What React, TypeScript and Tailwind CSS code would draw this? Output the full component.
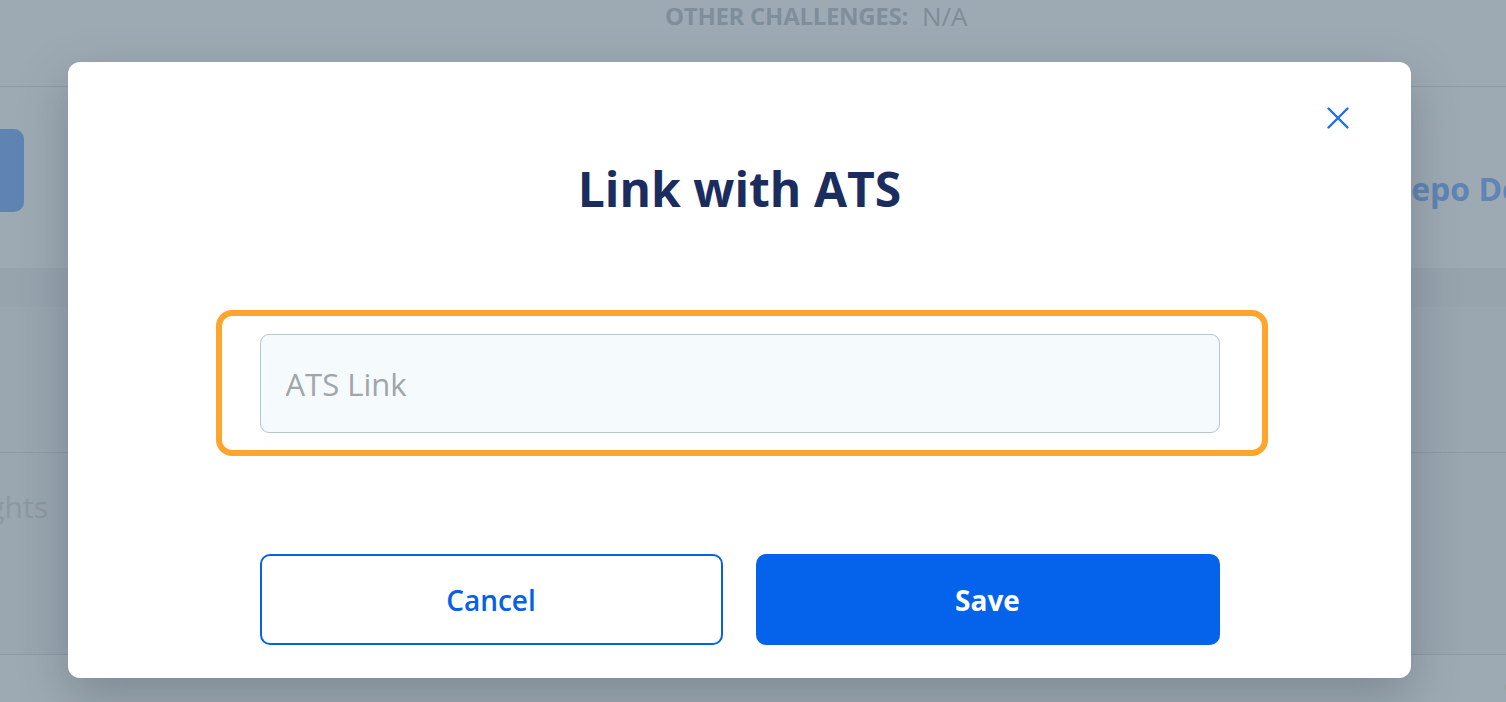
export default function App() {
  return (
    <div className="relative w-[1506px] h-[702px] overflow-hidden bg-[#9eaab3] font-['Open_Sans',sans-serif]">
      {/* dimmed page behind the dialog */}
      <div className="flex flex-col">
        <div className="h-[87px] flex items-start pt-[0px] pl-[665px] gap-[14px] border-b border-[#8e9ba6]">
          <span className="text-[24px] font-bold text-[#7f8e9b] leading-[32px] whitespace-nowrap tracking-[-0.3px]">OTHER CHALLENGES:</span>
          <span className="text-[26px] text-[#7e8c98] leading-[32px]">N/A</span>
        </div>
        <div className="h-[181px] flex items-start">
          <div className="shrink-0 w-[24px] h-[83px] mt-[42px] rounded-r-[10px] bg-[#5f84b3]"></div>
          <div className="shrink-0 ml-[1366px] mt-[80px] text-[32px] leading-[44px] font-bold text-[#5f84b5] whitespace-nowrap">Repo Details</div>
        </div>
        <div className="h-[39px] bg-[#97a4ae]"></div>
        <div className="h-[146px] bg-[#9aa6b0] border-b border-[#8d9aa5]"></div>
        <div className="h-[202px] bg-[#9aa6b0] border-b border-[#8d9aa5]">
          <div className="w-[48px] flex justify-end whitespace-nowrap pt-[31px] text-[30px] text-[#8c98a2]">Insights</div>
        </div>
        <div className="h-[46px] flex justify-end items-end pb-[2px]">
          <span className="text-[18px] text-[#86929c] -mr-[4px]">(</span>
        </div>
      </div>

      {/* dialog overlay */}
      <div className="absolute inset-0 pt-[62px] pl-[68px]">
        <div className="relative w-[1343px] h-[616px] bg-white rounded-[12px] shadow-[0_18px_50px_rgba(40,52,64,0.28)] flex flex-col items-center pt-[99px]">
          <button className="absolute top-[44px] right-[61px] w-[24px] h-[24px] flex items-center justify-center">
            <svg width="22" height="22" viewBox="0 0 22 22" fill="none" stroke="#1f6ef0" strokeWidth="2.4" strokeLinecap="round">
              <path d="M1.5 1.5L20.5 20.5M20.5 1.5L1.5 20.5" />
            </svg>
          </button>

          <h2 className="text-[48px] leading-[56px] font-bold text-[#1b2d5f]">Link with ATS</h2>

          <div className="mt-[93px] w-[1052px] h-[146px] border-[6px] border-[#ffa52d] rounded-[16px] pl-[38px] pt-[18px] ml-[4px]">
            <input
              className="w-[960px] h-[99px] rounded-[9px] border-[1.5px] border-[#b4c6d4] bg-[#f5fafd] px-[25px] text-[31px] text-[#555] placeholder:text-[#a1a5aa] outline-none"
              placeholder="ATS Link"
            />
          </div>

          <div className="mt-[98px] flex gap-[33px]">
            <button className="w-[463px] h-[91px] rounded-[10px] border-2 border-[#0562e8] bg-white text-[#0562e8] text-[28px] font-semibold">
              Cancel
            </button>
            <button className="w-[464px] h-[91px] rounded-[10px] bg-[#0562eb] text-white text-[28px] font-bold">
              Save
            </button>
          </div>
        </div>
      </div>
    </div>
  );
}
